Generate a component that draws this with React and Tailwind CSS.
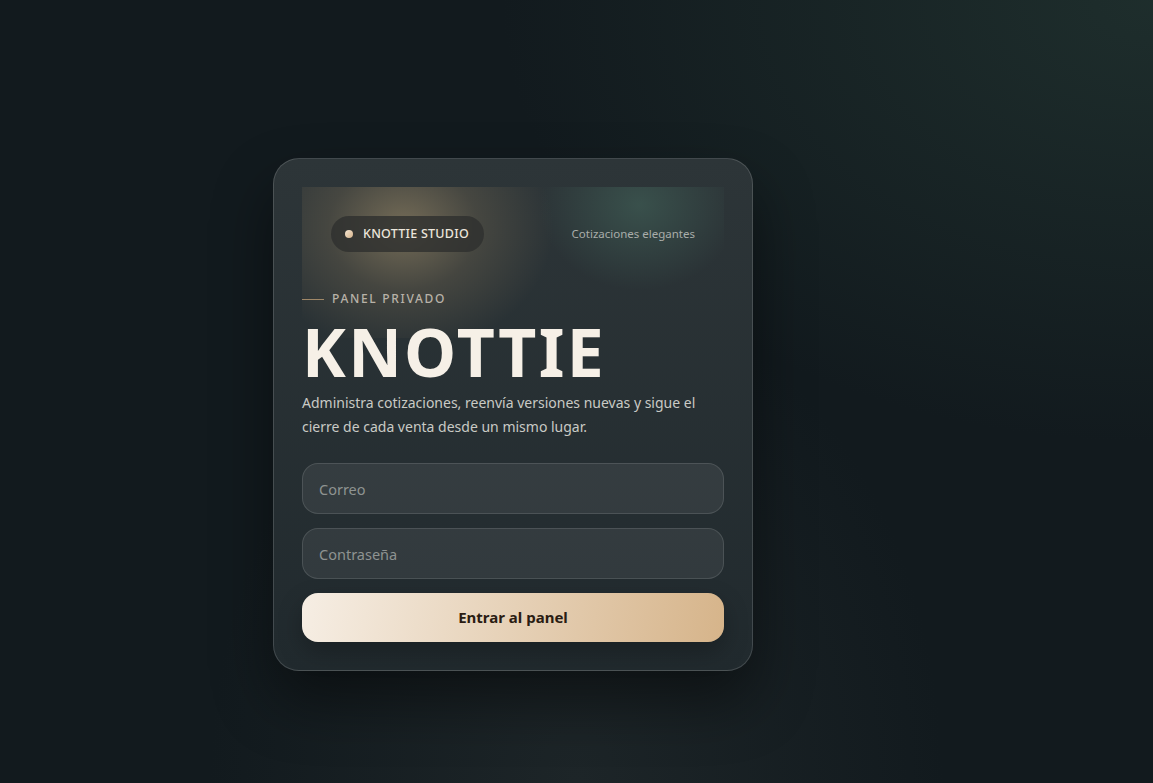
import { useState } from "react";

const font = { fontFamily: '"Noto Sans", "Open Sans", sans-serif' };

export default function App() {
  const [email, setEmail] = useState("");
  const [password, setPassword] = useState("");

  return (
    <div
      className="min-h-screen w-full flex items-start justify-center bg-[#121a1e] bg-[radial-gradient(ellipse_at_100%_0%,rgba(40,62,56,0.55),transparent_40%),radial-gradient(ellipse_at_50%_100%,rgba(40,48,50,0.5),transparent_45%)]"
      style={font}
    >
      <div className="mt-[158px] mr-[127px] w-[480px] rounded-[26px] border border-white/15 bg-gradient-to-b from-[#2d3538] to-[#212a2e] p-[28px] shadow-[0_30px_60px_rgba(0,0,0,0.45)]">
        {/* glow band behind the brand pill */}
        <div className="bg-[radial-gradient(ellipse_150px_125px_at_24%_27%,rgba(165,145,108,0.6),rgba(125,110,85,0.32)_50%,transparent_100%),radial-gradient(ellipse_100px_85px_at_80%_12%,rgba(70,108,96,0.5),transparent_100%)] bg-no-repeat pb-[30px]">
          <div className="flex items-center justify-between px-[29px] pt-[29px] pb-[38px]">
            <div className="flex items-center gap-[10px] h-[36px] rounded-full bg-[#2e302e]/80 pl-[14px] pr-[15px]">
              <span className="h-[8px] w-[8px] rounded-full bg-gradient-to-br from-[#f5e6d2] to-[#d5b38b]" />
              <span className="text-[12.5px] font-medium tracking-[0.02em] text-[#ece6dc]">
                KNOTTIE STUDIO
              </span>
            </div>
            <span className="text-[11.5px] text-[#a9adaa]">Cotizaciones elegantes</span>
          </div>
          <div className="flex items-center gap-[8px]">
            <span className="h-px w-[22px] bg-[#a08868]" />
            <span className="text-[12px] font-medium tracking-[0.14em] text-[#b8b2a8]">
              PANEL PRIVADO
            </span>
          </div>
        </div>

        <h1 className="-mt-[27px] text-[66px] leading-[80px] font-bold tracking-[0.035em] text-[#f6f0e7]">
          KNOTTIE
        </h1>
        <p className="text-[14px] leading-[24px] text-[#c9cac5]">
          Administra cotizaciones, reenvía versiones nuevas y sigue el cierre de cada venta desde un mismo lugar.
        </p>

        <form className="mt-[24px] flex flex-col gap-[14px]" onSubmit={(e) => e.preventDefault()}>
          <input
            type="email"
            value={email}
            onChange={(e) => setEmail(e.target.value)}
            placeholder="Correo"
            className="h-[51px] w-full rounded-[16px] border border-white/12 bg-white/[0.07] px-[16px] text-[14.5px] text-[#e8e4dc] placeholder:text-[#8e9391] outline-none"
          />
          <input
            type="password"
            value={password}
            onChange={(e) => setPassword(e.target.value)}
            placeholder="Contraseña"
            className="h-[51px] w-full rounded-[16px] border border-white/12 bg-white/[0.07] px-[16px] text-[14.5px] text-[#e8e4dc] placeholder:text-[#8e9391] outline-none"
          />
          <button
            type="submit"
            className="h-[49px] w-full rounded-[16px] bg-[linear-gradient(100deg,#f6eee4,#d6b48a)] text-[15px] font-bold text-[#2a1c12] shadow-[0_10px_25px_rgba(0,0,0,0.25)]"
          >
            Entrar al panel
          </button>
        </form>
      </div>
    </div>
  );
}
